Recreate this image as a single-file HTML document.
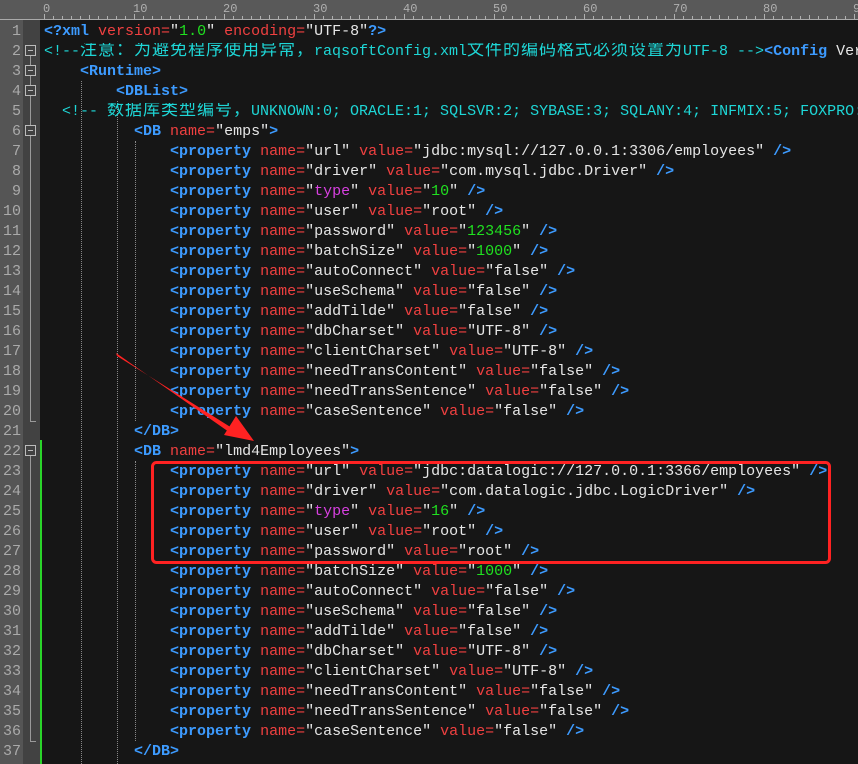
<!DOCTYPE html>
<html><head><meta charset="utf-8"><style>
html,body{margin:0;padding:0;width:858px;height:764px;overflow:hidden;background:#161616;}
#ruler{position:absolute;left:0;top:0;width:858px;height:20px;background:#595959;border-bottom:1px solid #aaa;box-sizing:border-box;}
#ruler span{position:absolute;top:2px;font:12px "Liberation Mono",monospace;color:#b0b0b0;}
#ruler i{position:absolute;bottom:0;width:1px;background:#b0b0b0;}
#gut{position:absolute;left:0;top:20px;width:23px;height:744px;background:#555;}
#fold{position:absolute;left:23px;top:20px;width:17px;height:744px;background:#424242;}
.ln{position:absolute;left:0;width:21px;text-align:right;font:15px "Liberation Mono",monospace;color:#aaa;line-height:20px;}
#code{position:absolute;left:44px;top:23px;width:814px;}
.l{height:20px;line-height:20px;white-space:pre;font:15px "Liberation Mono",monospace;color:#e6e6e6;overflow:hidden;}
.t{color:#3d9bff;font-weight:bold}
.a{color:#f04040}
.n{color:#20e020}
.m{color:#d840e0}
.c{color:#1ed6d6}
.k b{display:inline-block;width:18px;font-weight:normal;font-size:17px;font-family:"Noto Sans CJK SC",sans-serif;line-height:0;text-align:left}
.box{position:absolute;left:25px;width:9px;height:9px;border:1px solid #bbb;background:#424242}
.box:after{content:"";position:absolute;left:2px;top:4px;width:5px;height:1px;background:#bbb}
.vl{position:absolute;left:30px;width:1px;background:#999}
.hl{position:absolute;left:30px;width:6px;height:1px;background:#999}
.dg{position:absolute;width:0;border-left:1px dotted #888}
</style></head><body>
<div id="ruler"></div>
<div id="gut"></div>
<div id="fold"></div>
<div style="position:absolute;left:40px;top:440px;width:2px;height:324px;background:#2ad42a"></div>
<div id="nums"></div>
<div class="dg" style="left:81px;top:81px;height:683px"></div>
<div class="dg" style="left:117px;top:101px;height:663px"></div>
<div class="dg" style="left:135px;top:141px;height:280px"></div>
<div class="dg" style="left:135px;top:461px;height:280px"></div>
<div class="vl" style="top:56px;height:365px"></div>
<div class="vl" style="top:456px;height:285px"></div>
<div class="hl" style="top:421px"></div>
<div class="hl" style="top:741px"></div>
<div class="box" style="top:45px"></div>
<div class="box" style="top:65px"></div>
<div class="box" style="top:85px"></div>
<div class="box" style="top:125px"></div>
<div class="box" style="top:445px"></div>
<div id="code">
<div class="l"><span class="t">&lt;?xml</span> <span class="a">version=</span>"<span class="n">1.0</span>" <span class="a">encoding=</span>"UTF-8"<span class="t">?&gt;</span></div>
<div class="l"><span class="c">&lt;!--<span class="k">注意：为避免程序使用异常，</span>raqsoftConfig.xml<span class="k">文件的编码格式必须设置为</span>UTF-8 --&gt;</span><span class="t">&lt;Config</span> Version="3"</div>
<div class="l">    <span class="t">&lt;Runtime&gt;</span></div>
<div class="l">        <span class="t">&lt;DBList&gt;</span></div>
<div class="l">  <span class="c">&lt;!-- <span class="k">数据库类型编号，</span>UNKNOWN:0; ORACLE:1; SQLSVR:2; SYBASE:3; SQLANY:4; INFMIX:5; FOXPRO:6;</span></div>
<div class="l">          <span class="t">&lt;DB</span> <span class="a">name=</span>"emps"<span class="t">&gt;</span></div>
<div id="p1"></div>
</div>
<svg style="position:absolute;left:0;top:0" width="858" height="764">
<rect x="152.5" y="462.5" width="677" height="100" rx="4" fill="none" stroke="#ff2222" stroke-width="3"/>
<polygon points="116,353 117,356 232,428 229,432" fill="#ff2222"/>
<polygon points="254,441 224,435 236,416" fill="#ff2222"/>
</svg>
<script>
var r=document.getElementById('ruler'),h='';
for(var c=0;c<=90;c++){var x=44+c*9;h+='<i style="left:'+x+'px;height:'+(c%10==0?5:(c%5==0?4:3))+'px"></i>';if(c%10==0)h+='<span style="left:'+(x-1)+'px">'+c+'</span>';}
r.innerHTML=h;
var n='';for(var i=1;i<=37;i++)n+='<div class="ln" style="top:'+(22+(i-1)*20)+'px">'+i+'</div>';
document.getElementById('nums').innerHTML=n;
document.querySelectorAll('.k').forEach(function(e){e.innerHTML=e.textContent.split('').map(function(ch){return '<b>'+ch+'</b>';}).join('');});
function P(nm,val,typ){var v;
 if(typ=='n')v='"<span class="n">'+val+'</span>"';else v='"'+val+'"';
 var nmh=nm=='type'?'"<span class="m">type</span>"':'"'+nm+'"';
 return '<div class="l">              <span class="t">&lt;property</span> <span class="a">name=</span>'+nmh+' <span class="a">value=</span>'+v+' <span class="t">/&gt;</span></div>';}
var tail=[['batchSize','1000','n'],['autoConnect','false'],['useSchema','false'],['addTilde','false'],['dbCharset','UTF-8'],['clientCharset','UTF-8'],['needTransContent','false'],['needTransSentence','false'],['caseSentence','false']];
var s='';
[['url','jdbc:mysql://127.0.0.1:3306/employees'],['driver','com.mysql.jdbc.Driver'],['type','10','n'],['user','root'],['password','123456','n']].concat(tail).forEach(function(a){s+=P(a[0],a[1],a[2]);});
s+='<div class="l">          <span class="t">&lt;/DB&gt;</span></div>';
s+='<div class="l">          <span class="t">&lt;DB</span> <span class="a">name=</span>"lmd4Employees"<span class="t">&gt;</span></div>';
[['url','jdbc:datalogic://127.0.0.1:3366/employees'],['driver','com.datalogic.jdbc.LogicDriver'],['type','16','n'],['user','root'],['password','root']].concat(tail).forEach(function(a){s+=P(a[0],a[1],a[2]);});
s+='<div class="l">          <span class="t">&lt;/DB&gt;</span></div>';
document.getElementById('p1').outerHTML=s;
</script>
</body></html>
